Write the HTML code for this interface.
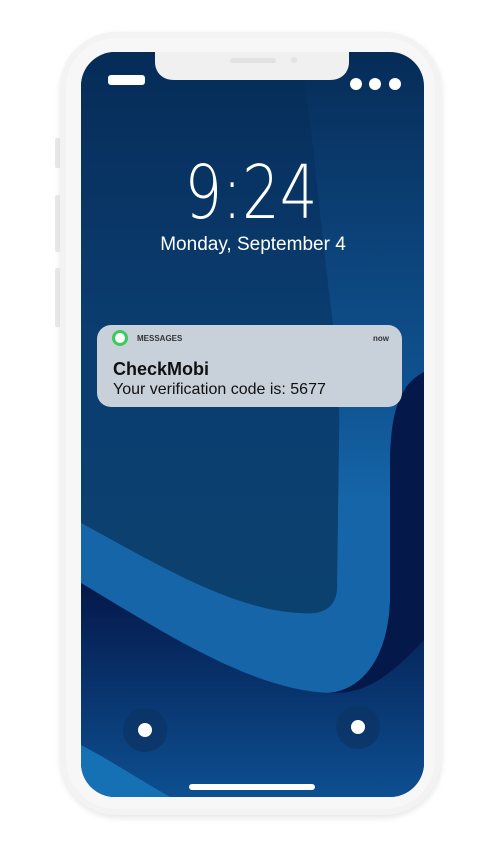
<!DOCTYPE html>
<html><head><meta charset="utf-8"><style>
html,body{margin:0;padding:0;background:#fff;width:500px;height:850px;overflow:hidden}
.t{font-family:"Liberation Sans",sans-serif}
</style></head><body>
<svg width="500" height="850" viewBox="0 0 500 850" xmlns="http://www.w3.org/2000/svg">
<defs>
<clipPath id="sc"><rect x="81" y="52" width="343" height="745" rx="34"/></clipPath>
<linearGradient id="base" x1="0" y1="52" x2="0" y2="797" gradientUnits="userSpaceOnUse">
<stop offset="0" stop-color="#062c58"/><stop offset="0.25" stop-color="#0c4278"/><stop offset="0.45" stop-color="#0f5290"/><stop offset="0.6" stop-color="#1565a8"/><stop offset="1" stop-color="#1565a8"/></linearGradient>
<linearGradient id="top" x1="0" y1="52" x2="0" y2="613" gradientUnits="userSpaceOnUse">
<stop offset="0" stop-color="#062c58"/><stop offset="0.5" stop-color="#0b3d70"/><stop offset="1" stop-color="#0b416f"/></linearGradient>
<linearGradient id="bot" x1="0" y1="0" x2="0" y2="1">
<stop offset="0" stop-color="#04184a"/><stop offset="1" stop-color="#0d4f90"/></linearGradient>
<filter id="sh" x="-10%" y="-10%" width="120%" height="120%"><feGaussianBlur stdDeviation="3"/></filter>
</defs>
<rect x="55" y="138" width="8" height="30" rx="2" fill="#e8e8e8"/>
<rect x="55" y="195" width="8" height="57" rx="2" fill="#e8e8e8"/>
<rect x="55" y="268" width="8" height="59" rx="2" fill="#e8e8e8"/>
<rect x="60" y="34" width="382" height="784" rx="58" fill="#d8d8d8" filter="url(#sh)" opacity="0.6"/>
<rect x="60" y="32" width="381" height="783" rx="56" fill="#f3f3f3"/>
<rect x="66" y="38" width="369" height="771" rx="50" fill="#f7f7f7"/>
<g clip-path="url(#sc)">
<rect x="81" y="52" width="343" height="745" fill="url(#base)"/>
<path d="M81 52 H300 C315 150 320 220 330 300 C338 360 340 400 339 440 L337 590 C335 610 320 615 300 613 C230 610 150 560 81 523 Z" fill="url(#top)"/>
<path d="M424 372 C398 385 391 415 390 460 L390 600 C388 660 360 695 320 693 L424 700 Z" fill="#04184a"/>
<path d="M81 583 C160 630 250 690 330 693 C370 695 395 670 424 640 V797 H81 Z" fill="url(#bot)"/>
<path d="M81 745 C110 760 140 780 170 797 H81 Z" fill="#1570b4"/>
</g>
<path d="M155 52 H349 V62 C349 72 342 80 330 80 H174 C162 80 155 72 155 62 Z" fill="#f0f0f0"/>
<rect x="230" y="58" width="46" height="5" rx="2.5" fill="#e2e2e2"/>
<circle cx="294" cy="60" r="3" fill="#e2e2e2"/>
<rect x="108" y="75" width="37" height="10" rx="3" fill="#fff"/>
<circle cx="356" cy="84" r="6" fill="#fff"/>
<circle cx="375" cy="84" r="6" fill="#fff"/>
<circle cx="395" cy="84" r="6" fill="#fff"/>
<text x="251" y="218" text-anchor="middle" font-family="DejaVu Sans" font-weight="200" font-size="74" fill="#fff" textLength="133" lengthAdjust="spacingAndGlyphs">9:24</text>
<text class="t" x="253" y="250" text-anchor="middle" font-size="19" fill="#fff">Monday, September 4</text>
<rect x="97" y="325" width="305" height="82" rx="14" fill="#c8d0d9"/>
<circle cx="120" cy="338" r="8" fill="#3bcb5c"/>
<circle cx="120" cy="338" r="5" fill="#fff"/>
<text class="t" x="137" y="341" font-size="8" font-weight="bold" fill="#333">MESSAGES</text>
<text class="t" x="373" y="341" font-size="8" font-weight="bold" fill="#333">now</text>
<text class="t" x="113" y="375" font-size="18" font-weight="bold" fill="#111">CheckMobi</text>
<text class="t" x="113" y="394" font-size="16" fill="#111">Your verification code is: 5677</text>
<circle cx="145" cy="730" r="22" fill="#0b3566" opacity="0.8"/>
<circle cx="145" cy="730" r="7" fill="#fff"/>
<circle cx="358" cy="727" r="22" fill="#0b3566" opacity="0.8"/>
<circle cx="358" cy="727" r="7" fill="#fff"/>
<rect x="189" y="784" width="126" height="6" rx="3" fill="#fff"/>
</svg>
</body></html>
